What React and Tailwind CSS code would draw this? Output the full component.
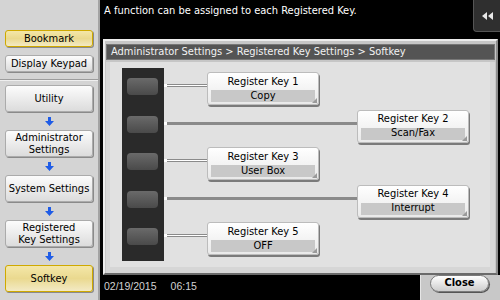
import React from 'react';

const font = "font-['DejaVu_Sans_Condensed','Liberation_Sans_Narrow','Liberation_Sans',sans-serif]";

const keys = [
  { label: 'Register Key 1', fn: 'Copy', far: false },
  { label: 'Register Key 2', fn: 'Scan/Fax', far: true },
  { label: 'Register Key 3', fn: 'User Box', far: false },
  { label: 'Register Key 4', fn: 'Interrupt', far: true },
  { label: 'Register Key 5', fn: 'OFF', far: false },
];

function SideBtn({ children, active, small }) {
  return (
    <div
      className={`w-[88px] ${small ? 'h-[17px]' : 'h-[27px]'} flex items-center justify-center text-center leading-[12px] text-[11px] text-black rounded-[3px] border shadow-[1px_1px_0_#8a8a8a] ${
        active
          ? 'border-[#cfa900] bg-gradient-to-b from-[#f4e7a8] via-[#ead98f] to-[#f3eac4]'
          : 'border-[#ababab] bg-gradient-to-b from-[#fcfcfc] to-[#dcdcdc]'
      }`}
    >
      {children}
    </div>
  );
}

function Arrow() {
  return (
    <div className="h-[18px] w-[88px] flex items-center justify-center">
      <svg width="9" height="9" viewBox="0 0 9 9">
        <path d="M3 0h3v4h3L4.5 9 0 4h3z" fill="#1f5ce6" />
      </svg>
    </div>
  );
}

function KeyCard({ label, fn }) {
  return (
    <div className="relative w-[112px] h-[33px] flex flex-col pt-[1px] px-[3px] rounded-[3px] border border-[#bcbcbc] bg-gradient-to-b from-white to-[#e9e9e9] shadow-[1px_2px_0_#7a7a7a]">
      <div className="h-[16px] flex items-center justify-center text-[11px] text-black">{label}</div>
      <div className="h-[12px] flex items-center justify-center bg-[#c8c8c8] text-[11px] text-black">{fn}</div>
      <div className="absolute right-[1px] bottom-[1px] w-0 h-0 border-l-[5px] border-l-transparent border-b-[5px] border-b-[#9a9a9a]" />
    </div>
  );
}

export default function App() {
  return (
    <div className={`w-[500px] h-[300px] flex bg-black overflow-hidden ${font}`}>
      {/* left menu */}
      <div className="w-[100px] h-full flex flex-col bg-[#d4d4d4] border-r-2 border-[#a3a3a3]">
        <div className="h-[80px] pt-[30px] px-[5px] flex flex-col gap-[8px] border-b border-[#9c9c9c]">
          <SideBtn active small>Bookmark</SideBtn>
          <SideBtn small>Display Keypad</SideBtn>
        </div>
        <div className="pt-[4px] px-[5px] flex flex-col border-t border-[#efefef]">
          <SideBtn>Utility</SideBtn>
          <Arrow />
          <SideBtn>Administrator<br />Settings</SideBtn>
          <Arrow />
          <SideBtn>System Settings</SideBtn>
          <Arrow />
          <SideBtn>Registered<br />Key Settings</SideBtn>
          <Arrow />
          <SideBtn active>Softkey</SideBtn>
        </div>
      </div>

      {/* main */}
      <div className="w-[400px] h-full flex flex-col">
        <div className="h-[37px] flex items-start">
          <p className="pl-[4px] pt-[3px] text-[11px] text-white">A function can be assigned to each Registered Key.</p>
          <div className="ml-auto w-[27px] h-[32px] flex items-center justify-center bg-[#2f2f2f] rounded-bl-[4px] border-l border-b border-[#555]">
            <svg width="11" height="8" viewBox="0 0 11 8">
              <path d="M0 4L5 0v8zM6 4l5-4v8z" fill="#e8e8e8" />
            </svg>
          </div>
        </div>

        <div className="ml-[3px] mr-[2px] mt-[2px] h-[236px] flex flex-col bg-[#c6c6c6] border-2 border-t-[#ececec] border-l-[#ececec] border-r-[#8c8c8c] border-b-[#6a6a6a] pt-[3px] px-[1px]">
          <div className="h-[16px] flex items-center pl-[4px] bg-[#545454] border border-[#777] text-[11px] text-[#f2f2f2]">
            Administrator Settings &gt; Registered Key Settings &gt; Softkey
          </div>
          <div className="mt-[2px] flex-1 bg-[#d6d6d6] pl-[4px] pr-[5px] pb-[6px]">
            <div className="h-full bg-[#e1e1e1] pt-[6px] pl-[12px] flex items-start">
              {/* key column */}
              <div className="w-[42px] bg-[#2a2a2a] pb-[5px] flex flex-col">
                {keys.map((k) => (
                  <div key={k.label} className="h-[37.5px] flex items-center pl-[5px]">
                    <div className="w-[31px] h-[17px] rounded-[4px] bg-gradient-to-b from-[#6a6a6a] to-[#4a4a4a]" />
                  </div>
                ))}
              </div>
              {/* connectors and cards */}
              <div className="flex flex-col">
                {keys.map((k) => (
                  <div key={k.label} className="h-[37.5px] flex items-start">
                    <div className="mt-[16px] flex items-center">
                      <div className="w-[3px] h-[3px] bg-white" />
                      {k.far ? (
                        <div className="w-[190px] h-[3px] bg-[#8a8a8a]" />
                      ) : (
                        <div className="w-[40px] h-[3px] border-y border-[#8a8a8a] bg-white" />
                      )}
                    </div>
                    <div className="mt-[4px]">
                      <KeyCard label={k.label} fn={k.fn} />
                    </div>
                  </div>
                ))}
              </div>
            </div>
          </div>
        </div>

        <div className="flex-1 flex">
          <div className="flex-1 flex items-start gap-[14px] pl-[4px] pt-[4px] font-['Liberation_Sans',sans-serif] text-[10.5px] text-[#d2d2d2]">
            <span>02/19/2015</span>
            <span>06:15</span>
          </div>
          <div className="w-[80px] bg-[#c8c8c8] border-l border-[#e6e6e6] pl-[9px]">
            <div className="w-[59px] h-[17px] flex items-center justify-center rounded-full border border-[#7a7a7a] bg-gradient-to-b from-white to-[#cdcdcd] shadow-[1px_1px_0_#555] text-[11px] font-bold text-black">
              Close
            </div>
          </div>
        </div>
      </div>
    </div>
  );
}
